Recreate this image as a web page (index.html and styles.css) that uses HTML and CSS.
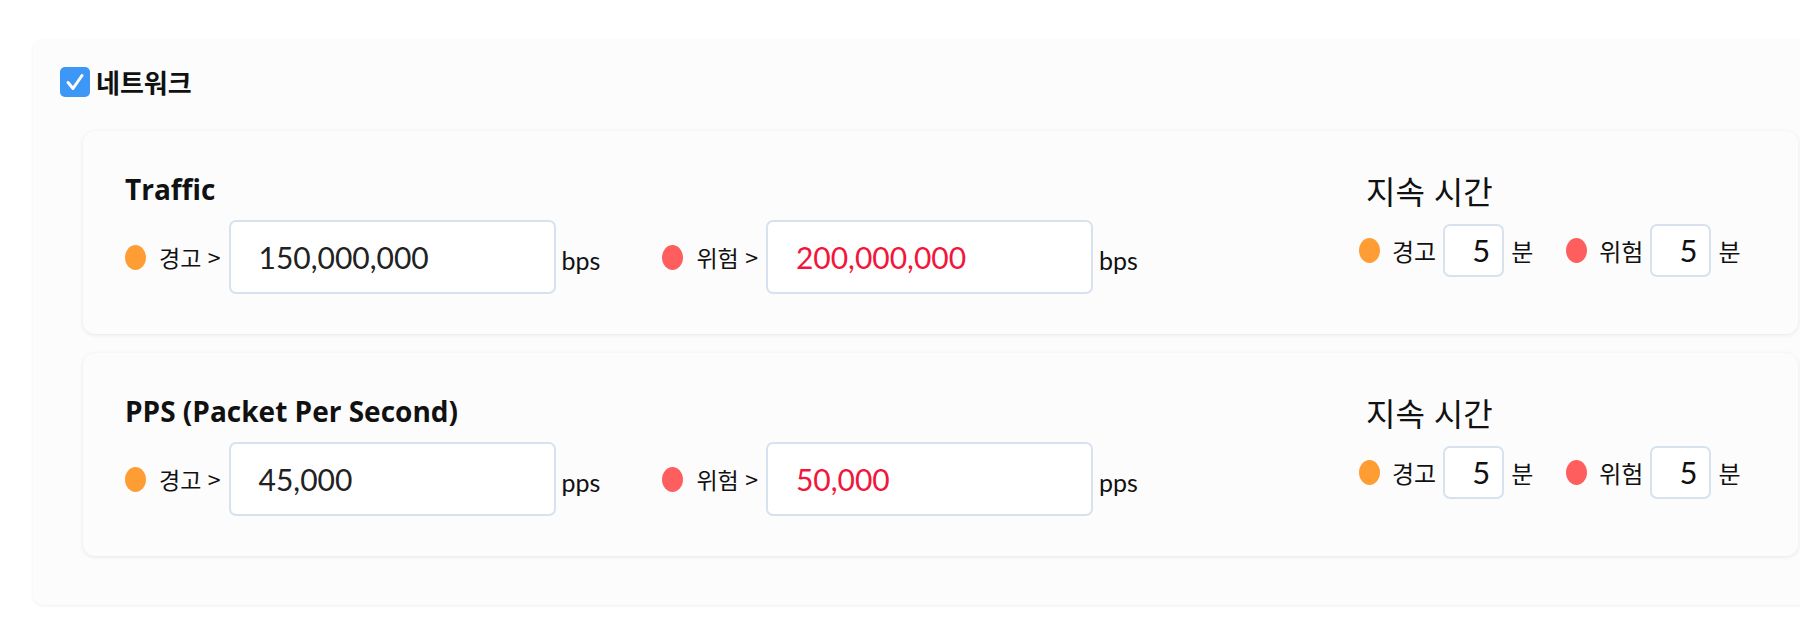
FILE: index.html
```html
<!DOCTYPE html>
<html lang="ko">
<head>
<meta charset="utf-8">
<link rel="stylesheet" href="styles.css">
</head>
<body>
<div class="panel">
  <div class="panel-head">
    <span class="checkbox">
      <svg width="30" height="30" viewBox="0 0 30 30"><rect x="0" y="0" width="30" height="30" rx="5" fill="#3d97f6"/><path d="M8 15.5 L13 21.5 L22 8.5" fill="none" stroke="#fff" stroke-width="3" stroke-linecap="round" stroke-linejoin="round"/></svg>
    </span>
    <span class="panel-title">네트워크</span>
  </div>

  <div class="card">
    <div class="main-col">
      <div class="card-title">Traffic</div>
      <div class="row">
        <span class="dot dot-warn"></span>
        <span class="label">경고 &gt;</span>
        <span class="field">150,000,000</span>
        <span class="unit">bps</span>
        <span class="dot dot-crit dot-gap"></span>
        <span class="label">위험 &gt;</span>
        <span class="field field-crit">200,000,000</span>
        <span class="unit">bps</span>
      </div>
    </div>
    <div class="dur-col">
      <div class="dur-title">지속 시간</div>
      <div class="row dur-row">
        <span class="dot dot-warn"></span>
        <span class="label">경고</span>
        <span class="mini">5</span>
        <span class="label">분</span>
        <span class="dot dot-crit dur-gap"></span>
        <span class="label">위험</span>
        <span class="mini">5</span>
        <span class="label">분</span>
      </div>
    </div>
  </div>

  <div class="card">
    <div class="main-col">
      <div class="card-title">PPS (Packet Per Second)</div>
      <div class="row">
        <span class="dot dot-warn"></span>
        <span class="label">경고 &gt;</span>
        <span class="field">45,000</span>
        <span class="unit">pps</span>
        <span class="dot dot-crit dot-gap"></span>
        <span class="label">위험 &gt;</span>
        <span class="field field-crit">50,000</span>
        <span class="unit">pps</span>
      </div>
    </div>
    <div class="dur-col">
      <div class="dur-title">지속 시간</div>
      <div class="row dur-row">
        <span class="dot dot-warn"></span>
        <span class="label">경고</span>
        <span class="mini">5</span>
        <span class="label">분</span>
        <span class="dot dot-crit dur-gap"></span>
        <span class="label">위험</span>
        <span class="mini">5</span>
        <span class="label">분</span>
      </div>
    </div>
  </div>
</div>
</body>
</html>
```

FILE: styles.css
```css
* { box-sizing: border-box; }
html, body { margin: 0; padding: 0; background: #ffffff; }
body {
  font-family: "Noto Sans CJK KR", "Noto Sans", sans-serif;
  color: #111111;
  overflow: hidden;
  width: 1800px;
  height: 640px;
}
.panel {
  margin: 39px 0 0 33px;
  width: 1790px;
  background: #fcfcfc;
  border-radius: 10px;
  box-shadow: 0 1px 3px rgba(0,0,0,0.07);
  padding: 28px 0 49px 27px;
}
.panel-head {
  display: flex;
  align-items: center;
  gap: 6px;
  height: 30px;
}
.checkbox { display: block; width: 30px; height: 30px; }
.checkbox svg { display: block; }
.panel-title {
  font-family: "Noto Sans CJK KR", sans-serif;
  font-weight: 700;
  font-size: 26px;
  line-height: 30px;
}
.card {
  margin: 34px 0 0 23px;
  width: 1715px;
  height: 203px;
  background: #fcfcfc;
  border-radius: 12px;
  box-shadow: 0 1px 4px rgba(0,0,0,0.09);
  display: flex;
  padding: 0 0 0 42px;
}
.card + .card { margin-top: 19px; }
.main-col { width: 1234px; padding-top: 39px; }
.dur-col { padding-top: 37px; }
.card-title {
  font-family: "Open Sans", sans-serif;
  font-weight: 700;
  font-size: 28px;
  line-height: 38px;
  height: 50px;
}
.row { display: flex; align-items: center; }
.dot {
  display: inline-block;
  width: 21px;
  height: 25px;
  border-radius: 50%;
  flex: none;
}
.dot-warn { background: #ff9d35; }
.dot-crit { background: #ff5e5e; }
.dot-gap { margin-left: 62px; }
.label {
  font-size: 23px;
  margin-left: 13px;
  white-space: nowrap;
}
.field {
  margin-left: 8px;
  width: 327px;
  height: 74px;
  background: #ffffff;
  border: 2px solid #d8e2ee;
  border-radius: 7px;
  font-family: "Lato", sans-serif;
  font-size: 30px;
  line-height: 70px;
  padding-left: 28px;
  color: #222;
}
.field-crit { color: #f2163c; }
.unit {
  margin-left: 6px;
  font-family: "Lato", sans-serif;
  font-size: 25px;
  padding-top: 6px;
}
.dur-title {
  font-size: 32px;
  line-height: 44px;
  height: 56px;
  padding-left: 7px;
}
.dur-row .label { margin-left: 12px; font-size: 24px; }
.mini {
  margin-left: 7px;
  width: 61px;
  height: 53px;
  background: #ffffff;
  border: 2px solid #d8e2ee;
  border-radius: 7px;
  font-family: "Lato", sans-serif;
  font-size: 31px;
  line-height: 49px;
  text-align: right;
  padding-right: 12px;
}
.dur-row .mini + .label { margin-left: 7px; }
.dur-gap { margin-left: 33px; }
```
